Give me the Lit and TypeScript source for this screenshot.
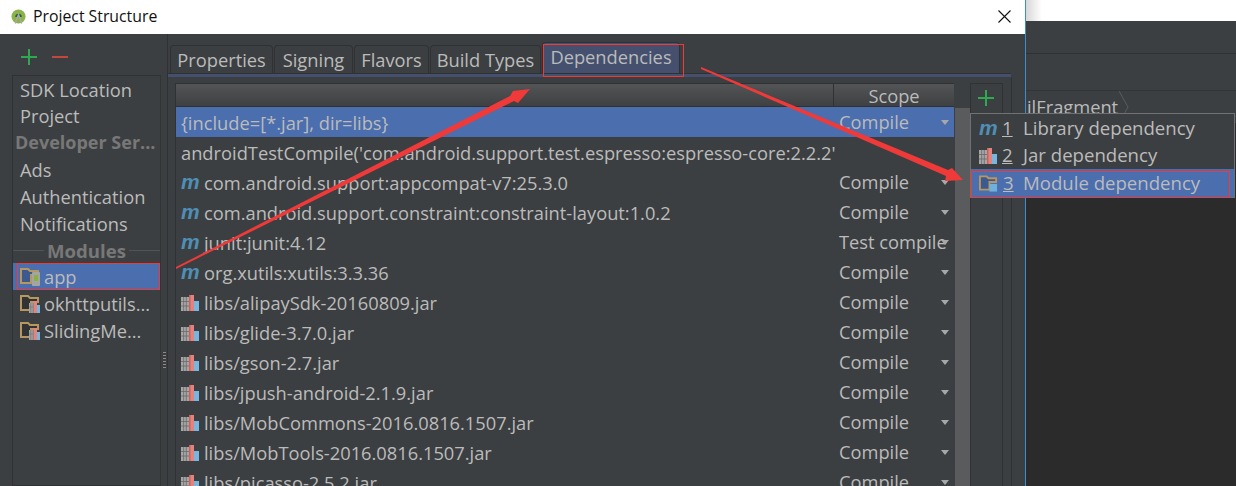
import { LitElement, html, css, svg } from "lit";
import { customElement } from "lit/decorators.js";

const jar = html`<svg class="ic" viewBox="0 0 18 18" width="18" height="18"><rect x="0" y="4" width="8" height="14" fill="#a6a6a6"/><path d="M2.6 4v14M5.3 4v14M0 8.5h8M0 13h8" stroke="#6a6a6a" stroke-width=".8"/><rect x="8" y="2" width="5" height="16" fill="#e2837e"/><rect x="8" y="2" width="1.5" height="16" fill="#c9625e"/><rect x="13" y="8" width="5" height="10" fill="#78b6e0"/></svg>`;
const mIcon = html`<span class="m">m</span>`;
const folder = (inner: unknown, top = 0) => html`<svg class="ic" viewBox="0 0 20 18" width="20" height="18"><path d="M1 ${top + 1}h7l2 2h8v4H11v8H1z" fill="rgba(0,0,0,.18)" stroke="#b8965f" stroke-width="2"/>${inner}</svg>`;
const modJar = folder(svg`<rect x="9" y="8" width="4.5" height="10" fill="#a6a6a6"/><path d="M10.5 8v10M12 8v10M9 12h4.5" stroke="#6a6a6a" stroke-width=".5"/><rect x="13.5" y="6" width="3.5" height="12" fill="#e2837e"/><rect x="17" y="10" width="3" height="8" fill="#78b6e0"/>`, 0);
const modApp = folder(svg`<rect x="12" y="4" width="8" height="14" rx="1" fill="#a4a4a4"/><rect x="14" y="7" width="4" height="6" fill="#86b33c"/>`, 0);
const modBlue = folder(svg`<rect x="11" y="10" width="8" height="8" fill="#6fb0dc"/>`, 1);

const plus = html`<svg viewBox="0 0 16 16" width="16" height="16"><path d="M8 0v16M0 8h16" stroke="#2fa84f" stroke-width="2"/></svg>`;

const tabs: [string, number][] = [["Properties", 103], ["Signing", 79], ["Flavors", 75], ["Build Types", 111], ["Dependencies", 138]];

const rows: [unknown, string, string][] = [
  [null, "{include=[*.jar], dir=libs}", "Compile"],
  [null, "androidTestCompile('com.android.support.test.espresso:espresso-core:2.2.2'", ""],
  [mIcon, "com.android.support:appcompat-v7:25.3.0", "Compile"],
  [mIcon, "com.android.support.constraint:constraint-layout:1.0.2", "Compile"],
  [mIcon, "junit:junit:4.12", "Test compile"],
  [mIcon, "org.xutils:xutils:3.3.36", "Compile"],
  [jar, "libs/alipaySdk-20160809.jar", "Compile"],
  [jar, "libs/glide-3.7.0.jar", "Compile"],
  [jar, "libs/gson-2.7.jar", "Compile"],
  [jar, "libs/jpush-android-2.1.9.jar", "Compile"],
  [jar, "libs/MobCommons-2016.0816.1507.jar", "Compile"],
  [jar, "libs/MobTools-2016.0816.1507.jar", "Compile"],
  [jar, "libs/picasso-2.5.2.jar", "Compile"],
];

@customElement("app-root")
export class AppRoot extends LitElement {
  static styles = css`
    :host { display: block; width: 1236px; height: 486px; overflow: hidden; position: relative; font-family: "Open Sans", "Noto Sans", sans-serif; font-size: 18.3px; color: #bbb; background: #2b2b2b; }
    * { box-sizing: border-box; }
    .page { display: flex; height: 486px; }
    .dialog { width: 1026px; flex: none; border-right: 1px solid #3d8bd0; display: flex; flex-direction: column; }
    .title { height: 34px; background: #fff; color: #111; display: flex; align-items: center; padding: 0 0 2px 10px; gap: 7px; font-size: 15.8px; flex: none; }
    .title .close { margin-left: auto; margin-right: 14px; display: flex; }
    .logo { flex: none; margin-left: 1px; }
    .body { flex: 1; min-height: 0; background: #3c3f41; display: flex; overflow: hidden; padding-left: 12px; }
    .side { width: 149px; flex: none; display: flex; flex-direction: column; }
    .tools { height: 41px; display: flex; align-items: flex-end; gap: 15px; padding: 0 0 10px 9px; flex: none; }
    .list { flex: 1; border: 1px solid #2f3133; border-right-color: #323436; }
    .si { height: 27px; display: flex; align-items: center; padding-left: 7px; gap: 4px; white-space: nowrap; line-height: 27px; }
    .si.first, .si.sep { height: 26px; }
    .si.head { font-weight: 700; color: #787878; padding-left: 2px; font-size: 18px; }
    .si.sep { justify-content: center; font-weight: 700; color: #787878; padding: 0; gap: 3px; font-size: 18.6px; }
    .si.sep i { flex: 1; height: 1px; background: #515355; }
    .si.sel { background: #4b6eaf; }
    .split { width: 7px; flex: none; border-right: 1px solid #2f3133; display: flex; align-items: center; justify-content: center; padding-top: 200px; }
    .grip { width: 3px; height: 16px; background: repeating-linear-gradient(#8a8a8a 0 1px, #3c3f41 1px 3px); }
    .main { width: 844px; flex: none; display: flex; flex-direction: column; }
    .tabs { height: 39px; padding-top: 11px; display: flex; align-items: flex-end; padding-left: 2px; gap: 1px; flex: none; }
    .tab { height: 28px; border: 1px solid #2f3133; border-bottom: 0; border-radius: 4px 4px 0 0; display: flex; align-items: center; justify-content: center; background: #3c3f41; line-height: 28px; white-space: nowrap; flex: none; }
    .tab.on { background: #44506e; height: 31px; padding-bottom: 2px; }
    .bar { height: 4px; background: #44506e; border-top: 1px solid #2f3133; flex: none; margin-right: 1px; }
    .panel { flex: 1; min-height: 0; display: flex; padding: 6px 8px 0 7px; border-right: 1px solid #2f3133; }
    .table { width: 779px; flex: none; display: flex; flex-direction: column; border-left: 1px solid #2f3133; }
    .th { height: 24px; flex: none; display: flex; background: linear-gradient(#525456, #3e4042); border-bottom: 1px solid #2f3133; border-top: 1px solid #2f3133; }
    .th .a { width: 658px; border-right: 1px solid #2f3133; }
    .th .b { flex: 1; text-align: center; line-height: 23px; }
    .tr { height: 30px; flex: none; display: flex; align-items: center; padding-left: 5px; gap: 5px; position: relative; white-space: nowrap; }
    .tr.sel { background: #4b6eaf; }
    .scope { position: absolute; left: 663px; top: 0; line-height: 30px; }
    .tri { position: absolute; left: 765px; top: 13px; width: 0; height: 0; border-left: 4px solid transparent; border-right: 4px solid transparent; border-top: 5px solid #a8a8a8; }
    .ic { flex: none; }
    .m { font: italic 700 21px/18px "Liberation Sans", sans-serif; color: #4f8fb5; width: 18px; flex: none; }
    .scroll { width: 16px; flex: none; background: #3c3f41; padding: 25px 0 0 1px; }
    .thumb { height: 100%; background: #595b5d; width: 15px; }
    .rt { width: 33px; flex: none; border-left: 1px solid #2f3133; border-right: 1px solid #2f3133; border-top: 1px solid #2f3133; display: flex; justify-content: center; padding: 6px 1px 0 0; height: calc(100% + 1px); }
    .bg { flex: 1; display: flex; flex-direction: column; min-width: 0; }
    .bg1 { height: 21px; background: linear-gradient(90deg, #d8d8d8, #fff 16px); flex: none; }
    .bg2 { height: 33px; background: #3c3f41; border-bottom: 1px solid #2f3133; flex: none; }
    .bg3 { height: 36px; background: #3c3f41; flex: none; }
    .bg4 { height: 33px; background: #3c3f41; border-top: 1px solid #323436; flex: none; white-space: nowrap; line-height: 32px; overflow: hidden; padding-left: 1px; display: flex; }
    .bg4 svg { margin-left: 1px; flex: none; }
    .popup { position: absolute; left: 970px; top: 113px; width: 265px; height: 85px; background: #3c3f41; border: 1px solid #6f7173; font-size: 18.6px; }
    .mi { height: 27px; display: flex; align-items: center; padding-left: 8px; gap: 5px; white-space: nowrap; }
    .mi.sel { background: #4b6eaf; height: 28px; margin-top: 1px; padding-bottom: 1px; }
    .mi.sel .ic { width: 19px; }
    .mi u { width: 11px; margin-right: 5px; flex: none; }
    .mi.sel u { margin-right: 4px; }
    .mark { position: absolute; border: 1px solid #f03a3a; pointer-events: none; }
    .ann { position: absolute; left: 0; top: 0; pointer-events: none; }
  `;
  render() {
    return html`
      <div class="page">
        <div class="dialog">
          <div class="title">
            <svg class="logo" viewBox="0 0 16 16" width="15" height="15"><circle cx="8" cy="8" r="7.5" fill="#8ab44a"/><path d="M4.5 8.5a3.5 3.5 0 0 1 7 0z" fill="#2f5d3a"/><path d="M4.5 15.5L8 6l3.5 9.5" fill="none" stroke="#a8a8a8" stroke-width="1.5"/></svg>
            Project Structure
            <span class="close"><svg viewBox="0 0 13 13" width="13" height="13"><path d="M.5.5l12 12M12.5.5l-12 12" stroke="#111" stroke-width="1.1"/></svg></span>
          </div>
          <div class="body">
            <div class="side">
              <div class="tools">
                ${plus}
                <svg viewBox="0 0 16 16" width="16" height="16"><path d="M0 8h16" stroke="#c0483e" stroke-width="2"/></svg>
              </div>
              <div class="list">
                <div class="si first">SDK Location</div>
                <div class="si">Project</div>
                <div class="si head">Developer Ser...</div>
                <div class="si">Ads</div>
                <div class="si">Authentication</div>
                <div class="si">Notifications</div>
                <div class="si sep"><i></i>Modules<i></i></div>
                <div class="si sel">${modApp}app</div>
                <div class="si">${modJar}okhttputils...</div>
                <div class="si">${modJar}SlidingMe...</div>
              </div>
            </div>
            <div class="split"><div class="grip"></div></div>
            <div class="main">
              <div class="tabs">
                ${tabs.map(([t, w], i) => html`<div class="tab ${i === 4 ? "on" : ""}" style="width:${w}px">${t}</div>`)}
              </div>
              <div class="bar"></div>
              <div class="panel">
                <div class="table">
                  <div class="th"><div class="a"></div><div class="b">Scope</div></div>
                  ${rows.map(([ic, t, s], i) => html`<div class="tr ${i === 0 ? "sel" : ""}">${ic}<span>${t}</span>${s ? html`<span class="scope">${s}</span><span class="tri"></span>` : ""}</div>`)}
                </div>
                <div class="scroll"><div class="thumb"></div></div>
                <div class="rt">${plus}</div>
              </div>
            </div>
          </div>
        </div>
        <div class="bg">
          <div class="bg1"></div><div class="bg2"></div><div class="bg3"></div>
          <div class="bg4">ilFragment<svg viewBox="0 0 10 32" width="10" height="32"><path d="M0 0l9 16-9 16" fill="none" stroke="#5a5c5e"/></svg></div>
        </div>
      </div>
      <div class="popup">
        <div class="mi">${mIcon}<u>1</u>Library dependency</div>
        <div class="mi">${jar}<u>2</u>Jar dependency</div>
        <div class="mi sel">${modBlue}<u>3</u>Module dependency</div>
      </div>
      <div class="mark" style="left:17px;top:263px;width:143px;height:27px"></div>
      <div class="mark" style="left:543px;top:44px;width:141px;height:33px"></div>
      <div class="mark" style="left:971px;top:171px;width:259px;height:27px"></div>
      <svg class="ann" width="1236" height="486" viewBox="0 0 1236 486">
        <path d="M176 267L510 96l3-5 17-2-12 14-4-2L176 269z" fill="#f03a3a"/>
        <path d="M701 67L948 170l4-2 11 12-18 1 1-5L701 69z" fill="#f03a3a"/>
      </svg>
    `;
  }
}
